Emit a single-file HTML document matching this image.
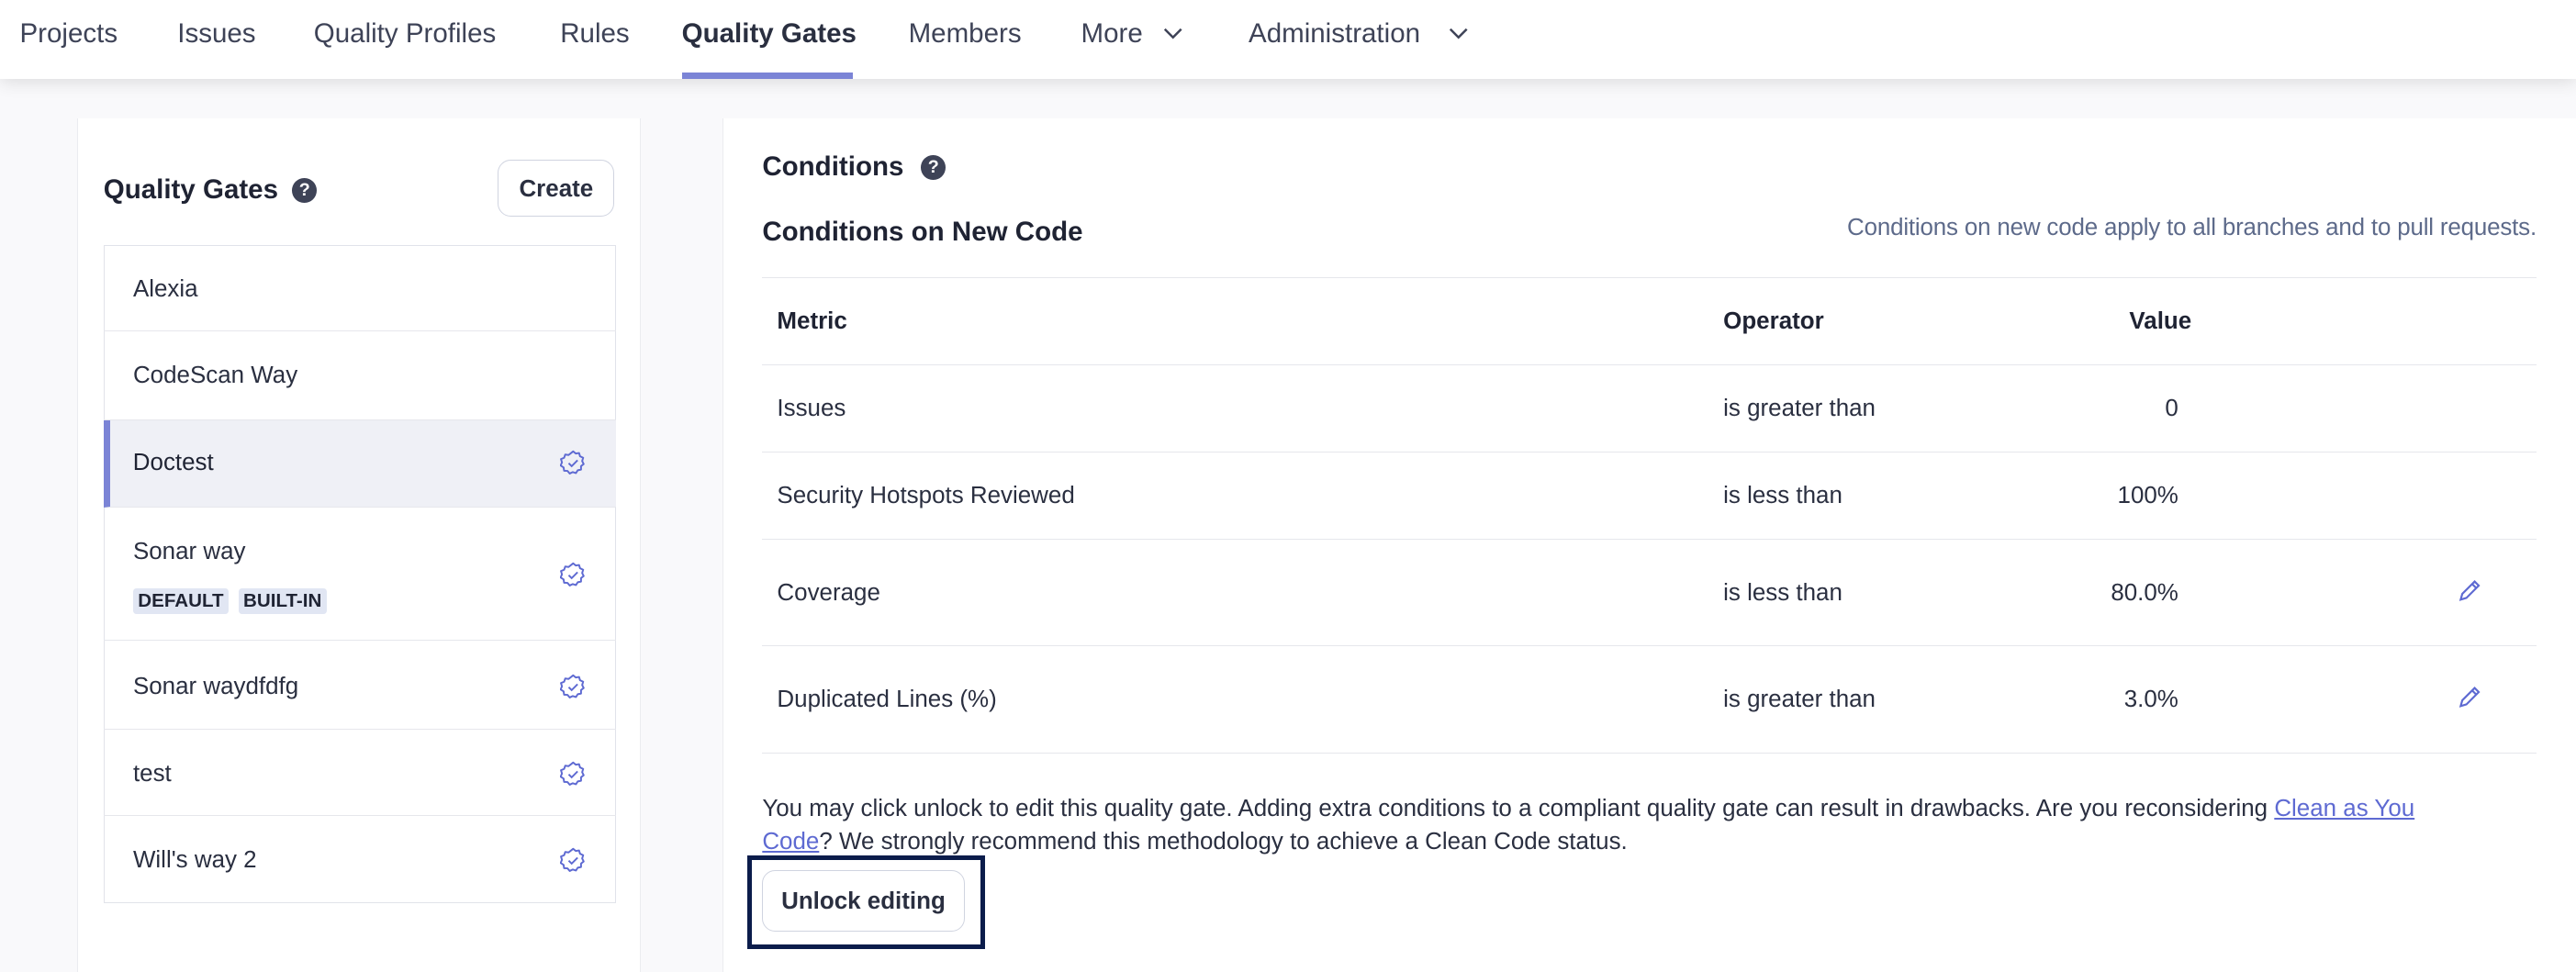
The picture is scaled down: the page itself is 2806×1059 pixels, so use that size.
<!DOCTYPE html>
<html><head><meta charset="utf-8"><style>
html,body{margin:0;padding:0}
body{width:1568px;height:585.6px;overflow:hidden;zoom:1.7895;background:#f9f9fb;font-family:"Liberation Sans",sans-serif;color:#2a2f40;position:relative}
.a{position:absolute;white-space:nowrap}
.nav{position:absolute;left:0;top:0;width:1568px;height:48px;background:#fff;box-shadow:0 2px 10px rgba(0,0,0,.12)}
.nav .a{font-size:16.5px;color:#3e4357;top:11px}
.card{position:absolute;background:#fff;border-left:1px solid #ebecf0;border-right:1px solid #ebecf0}
.help{display:inline-block;width:15px;height:15px;border-radius:50%;background:#3e4357;color:#fff;font-size:11px;font-weight:bold;text-align:center;line-height:15px;vertical-align:middle}
.row{position:absolute;left:63px;width:312px;border-bottom:1px solid #e6e7ec;box-sizing:border-box;font-size:14.5px}
.row span.t{position:absolute;left:18px}
.badge{display:inline-block;background:#e1e6f3;font-size:11.5px;font-weight:bold;padding:1px 3px;border-radius:2px;margin-right:6px;color:#1f2333}
.tr{position:absolute;left:464px;width:1080px;border-bottom:1px solid #e6e7ec;font-size:14.5px}
.tr span{position:absolute}
</style></head><body>
<div class="nav">
<span class="a" style="left:12px">Projects</span>
<span class="a" style="left:108px">Issues</span>
<span class="a" style="left:191px">Quality Profiles</span>
<span class="a" style="left:341px">Rules</span>
<span class="a" style="left:415px;font-weight:bold;color:#2a2f40">Quality Gates</span>
<div class="a" style="left:415px;top:44px;width:104px;height:4px;background:#7b84d6"></div>
<span class="a" style="left:553px">Members</span>
<span class="a" style="left:658px">More</span>
<svg class="a" style="left:708px;top:17px" width="12" height="8" viewBox="0 0 12 8"><path d="M1 1l5 5 5-5" fill="none" stroke="#3e4357" stroke-width="1.4"/></svg>
<span class="a" style="left:760px">Administration</span>
<svg class="a" style="left:882px;top:17px" width="12" height="8" viewBox="0 0 12 8"><path d="M1 1l5 5 5-5" fill="none" stroke="#3e4357" stroke-width="1.4"/></svg>
</div>

<div class="card" style="left:47px;top:72px;width:342px;height:520px"></div>
<div class="card" style="left:440px;top:72px;width:1130px;height:520px;border-right:none"></div>

<span class="a" style="left:63px;top:106px;font-size:16.5px;font-weight:bold;color:#1f2333">Quality Gates <span class="help" style="margin-left:4px">?</span></span>
<div class="a" style="left:303px;top:97px;width:70px;height:34px;border:1px solid #d0d4e0;border-radius:8px;font-size:14.5px;font-weight:bold;text-align:center;line-height:35px">Create</div>

<div class="a" style="left:63px;top:149px;width:312px;height:401px;border:1px solid #e1e3ea;box-sizing:border-box"></div>
<div class="row" style="top:149px;height:53px"><span class="t" style="top:19px">Alexia</span></div>
<div class="row" style="top:202px;height:54px"><span class="t" style="top:19px">CodeScan Way</span></div>
<div class="row" style="top:256px;height:53px;background:#eff0f6;border-left:4px solid #7b84d6"><span class="t" style="top:18px;left:14px;color:#1f2333">Doctest</span></div>
<div class="row" style="top:309px;height:81px"><span class="t" style="top:19px">Sonar way</span><span class="t" style="top:48px"><span class="badge">DEFAULT</span><span class="badge">BUILT-IN</span></span></div>
<div class="row" style="top:390px;height:54px"><span class="t" style="top:20px">Sonar waydfdfg</span></div>
<div class="row" style="top:444px;height:53px"><span class="t" style="top:19px">test</span></div>
<div class="row" style="top:497px;height:53px;border-bottom:none"><span class="t" style="top:19px">Will's way 2</span></div>

<svg width="0" height="0" style="position:absolute"><defs><symbol id="v" viewBox="0 0 16 16"><path d="M8 1l1.6 1.3 2-.3.6 2 1.9.9-.6 2 .9 1.8-1.6 1.3v2.1l-2 .4-1.1 1.7-2-.6-1.8.9-1.3-1.6-2.1-.1-.3-2-1.8-1.2.8-1.9-.6-2 1.9-.8.7-2 2 .3z" fill="none" stroke="#5e6ad2" stroke-width="1.1" stroke-linejoin="round"/><path d="M5.3 8.2l1.8 1.8 3.6-3.6" fill="none" stroke="#5e6ad2" stroke-width="1.1"/></symbol></defs></svg>
<svg class="a" style="left:341px;top:274px" width="16" height="16"><use href="#v"/></svg>
<svg class="a" style="left:341px;top:342px" width="16" height="16"><use href="#v"/></svg>
<svg class="a" style="left:341px;top:410px" width="16" height="16"><use href="#v"/></svg>
<svg class="a" style="left:341px;top:463px" width="16" height="16"><use href="#v"/></svg>
<svg class="a" style="left:341px;top:516px" width="16" height="16"><use href="#v"/></svg>

<span class="a" style="left:464px;top:92px;font-size:16.5px;font-weight:bold;color:#1f2333">Conditions <span class="help" style="margin-left:6px">?</span></span>
<span class="a" style="left:464px;top:132px;font-size:16.5px;font-weight:bold;color:#1f2333">Conditions on New Code</span>
<span class="a" style="right:24px;top:131px;font-size:14.5px;color:#5d6a8a;letter-spacing:-0.1px">Conditions on new code apply to all branches and to pull requests.</span>

<div class="a" style="left:464px;top:169px;width:1080px;border-top:1px solid #e6e7ec"></div>
<div class="tr" style="top:169px;height:53px;font-weight:bold;color:#1f2333"><span style="left:9px;top:19px">Metric</span><span style="left:585px;top:19px">Operator</span><span style="right:210px;top:19px">Value</span></div>
<div class="tr" style="top:222px;height:53px"><span style="left:9px;top:19px">Issues</span><span style="left:585px;top:19px">is greater than</span><span style="right:218px;top:19px">0</span></div>
<div class="tr" style="top:275px;height:53px"><span style="left:9px;top:19px">Security Hotspots Reviewed</span><span style="left:585px;top:19px">is less than</span><span style="right:218px;top:19px">100%</span></div>
<div class="tr" style="top:328px;height:65px"><span style="left:9px;top:25px">Coverage</span><span style="left:585px;top:25px">is less than</span><span style="right:218px;top:25px">80.0%</span>
<svg style="position:absolute;left:1031px;top:24px" width="16" height="16" viewBox="0 0 16 16"><path d="M3 13l1-3.5 7.5-7.5 2.5 2.5-7.5 7.5zM10 3.5l2.5 2.5" fill="none" stroke="#5e6ad2" stroke-width="1.2"/></svg></div>
<div class="tr" style="top:393px;height:65px"><span style="left:9px;top:25px">Duplicated Lines (%)</span><span style="left:585px;top:25px">is greater than</span><span style="right:218px;top:25px">3.0%</span>
<svg style="position:absolute;left:1031px;top:24px" width="16" height="16" viewBox="0 0 16 16"><path d="M3 13l1-3.5 7.5-7.5 2.5 2.5-7.5 7.5zM10 3.5l2.5 2.5" fill="none" stroke="#5e6ad2" stroke-width="1.2"/></svg></div>

<div class="a" style="left:464px;top:483px;width:1050px;white-space:normal;font-size:14.5px;line-height:20px;color:#2a2f40">You may click unlock to edit this quality gate. Adding extra conditions to a compliant quality gate can result in drawbacks. Are you reconsidering <span style="color:#5e6ad2;text-decoration:underline">Clean as You Code</span>? We strongly recommend this methodology to achieve a Clean Code status.</div>
<div class="a" style="left:455px;top:521px;width:139px;height:51px;border:3px solid #0b1c4b"></div>
<div class="a" style="left:464px;top:530px;width:122px;height:36px;border:1px solid #d0d4e0;border-radius:8px;font-size:14.5px;font-weight:bold;text-align:center;line-height:37px;background:#fff">Unlock editing</div>
</body></html>
